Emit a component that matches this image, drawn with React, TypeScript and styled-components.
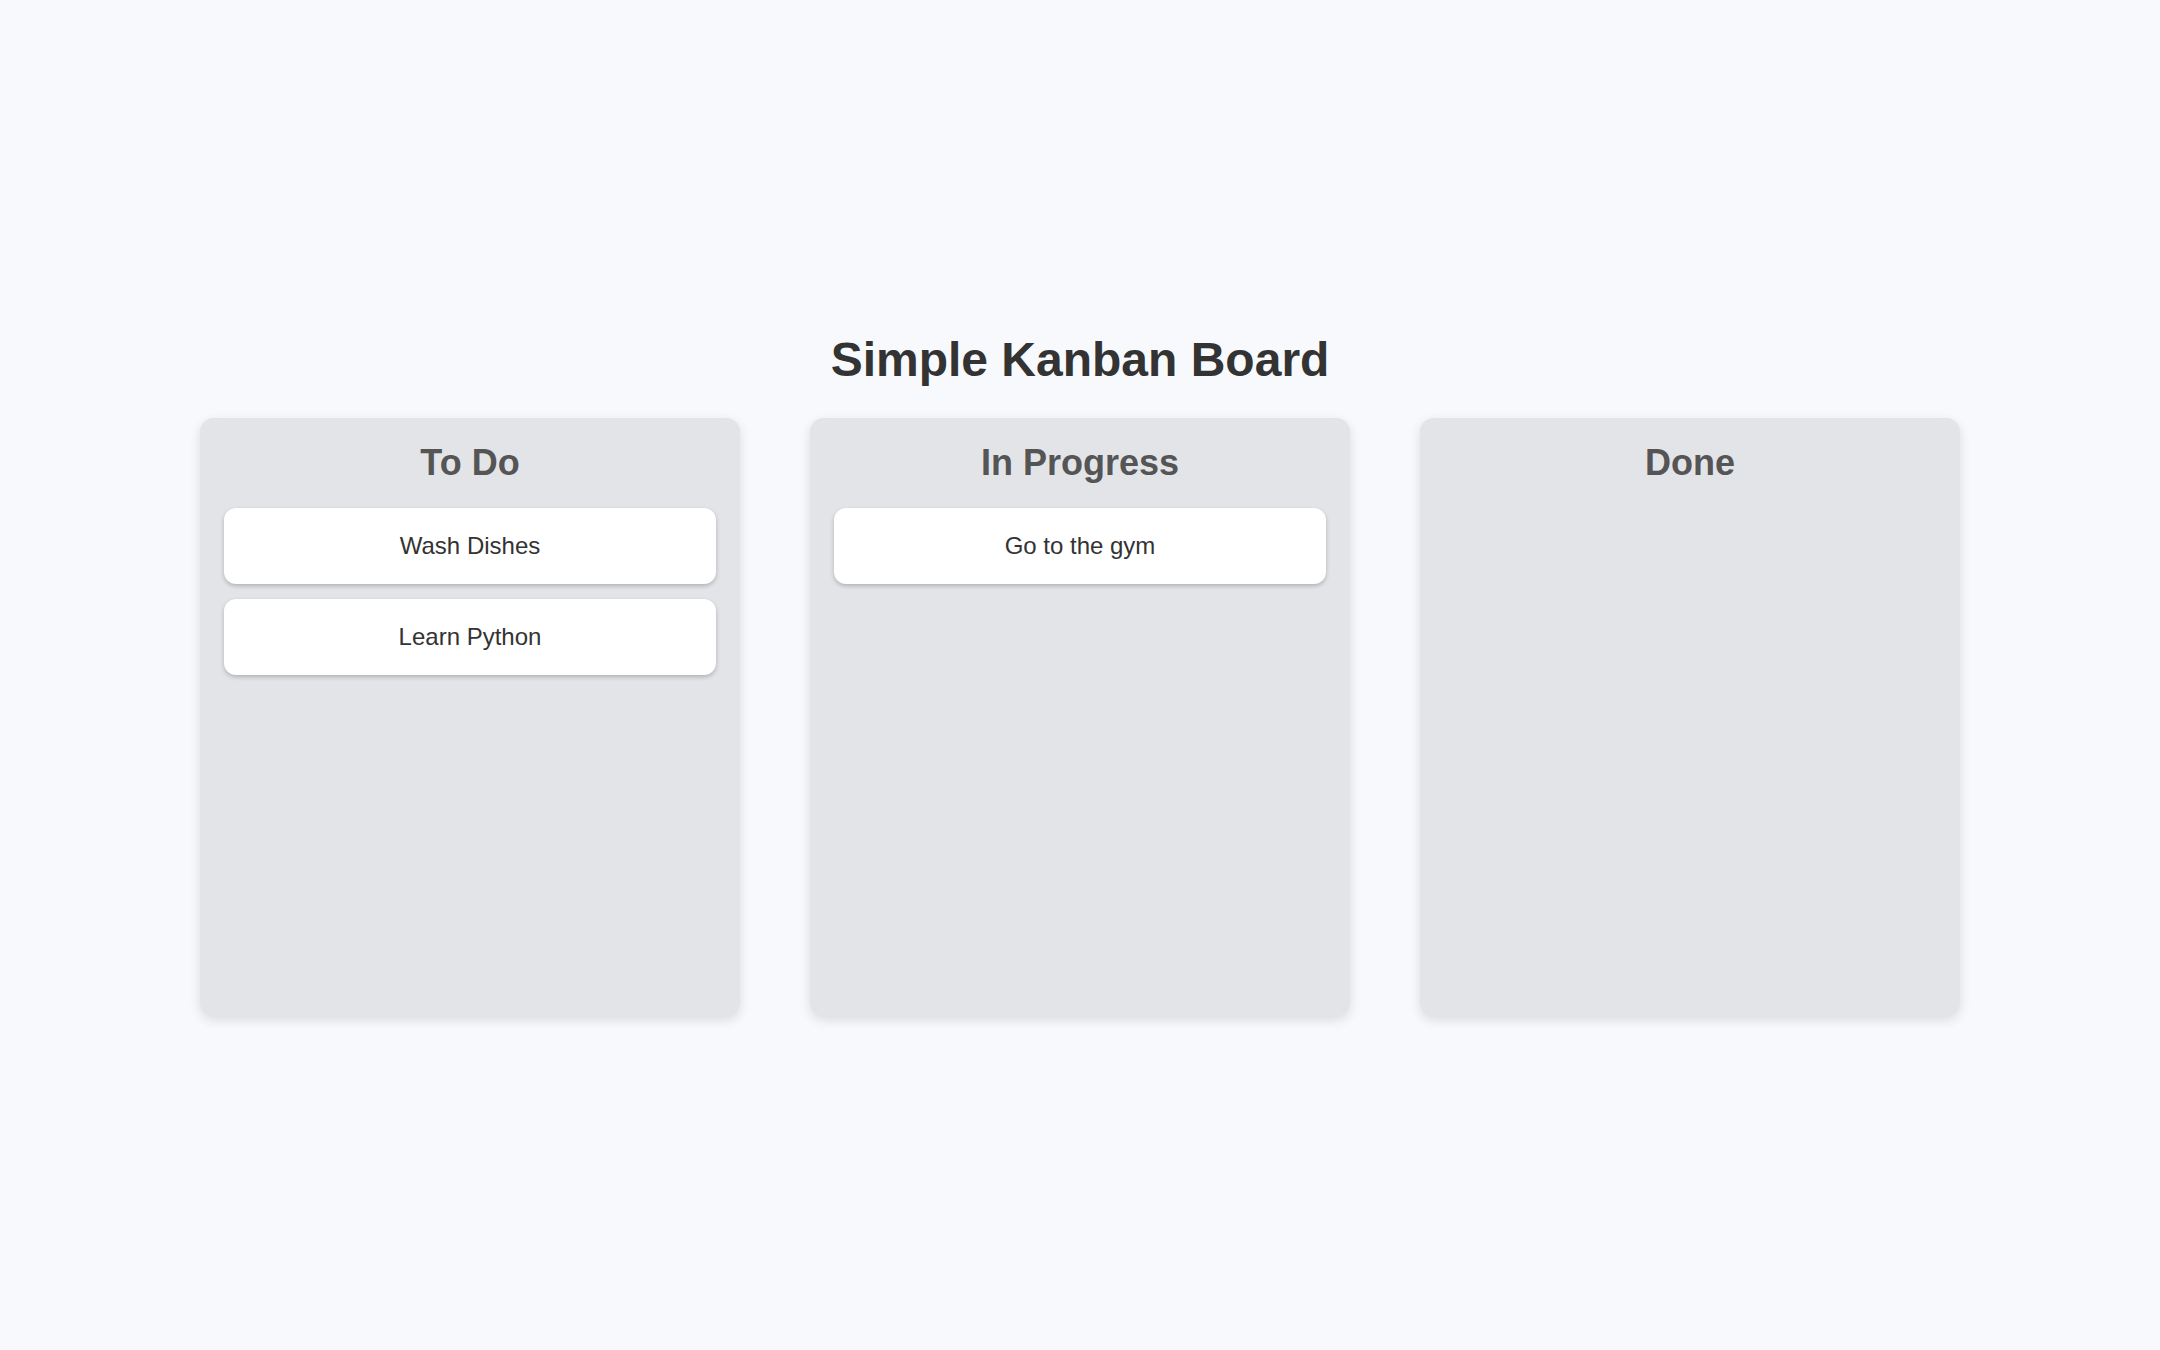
import styled, { createGlobalStyle } from 'styled-components';

const GlobalStyle = createGlobalStyle`
  html, body {
    margin: 0;
    padding: 0;
  }
  body {
    background: #f7f9fc;
    font-family: "Liberation Sans", Arial, sans-serif;
    font-size: 24px;
    color: #333;
  }
`;

const columns = [
  { title: 'To Do', tasks: ['Wash Dishes', 'Learn Python'] },
  { title: 'In Progress', tasks: ['Go to the gym'] },
  { title: 'Done', tasks: [] as string[] },
];

const App = () => {
  return (
    <>
      <GlobalStyle />
      <Page>
        <Title>Simple Kanban Board</Title>
        <Board>
          {columns.map((column) => (
            <Column key={column.title}>
              <ColumnTitle>{column.title}</ColumnTitle>
              {column.tasks.map((task) => (
                <Task key={task}>{task}</Task>
              ))}
            </Column>
          ))}
        </Board>
      </Page>
    </>
  );
};

const Page = styled.div`
  min-height: 100vh;
  display: flex;
  flex-direction: column;
  align-items: center;
  justify-content: center;
`;

const Title = styled.h1`
  margin: 32px 0 31px;
  font-size: 48px;
  font-weight: 700;
  color: #333;
`;

const Board = styled.div`
  display: flex;
  gap: 70px;
  margin-bottom: 34px;
`;

const Column = styled.div`
  width: 540px;
  height: 598px;
  box-sizing: border-box;
  padding: 24px 24px 24px;
  background: #e3e4e8;
  border-radius: 14px;
  box-shadow: 0 4px 12px rgba(0, 0, 0, 0.12);
  display: flex;
  flex-direction: column;
  gap: 15px;
`;

const ColumnTitle = styled.h2`
  margin: 0 0 9px;
  font-size: 36px;
  font-weight: 700;
  text-align: center;
  color: #555;
`;

const Task = styled.div`
  background: #fff;
  border-radius: 12px;
  padding: 24px;
  text-align: center;
  font-size: 24px;
  color: #333;
  box-shadow: 0 2px 4px rgba(0, 0, 0, 0.22);
`;

export default App;
